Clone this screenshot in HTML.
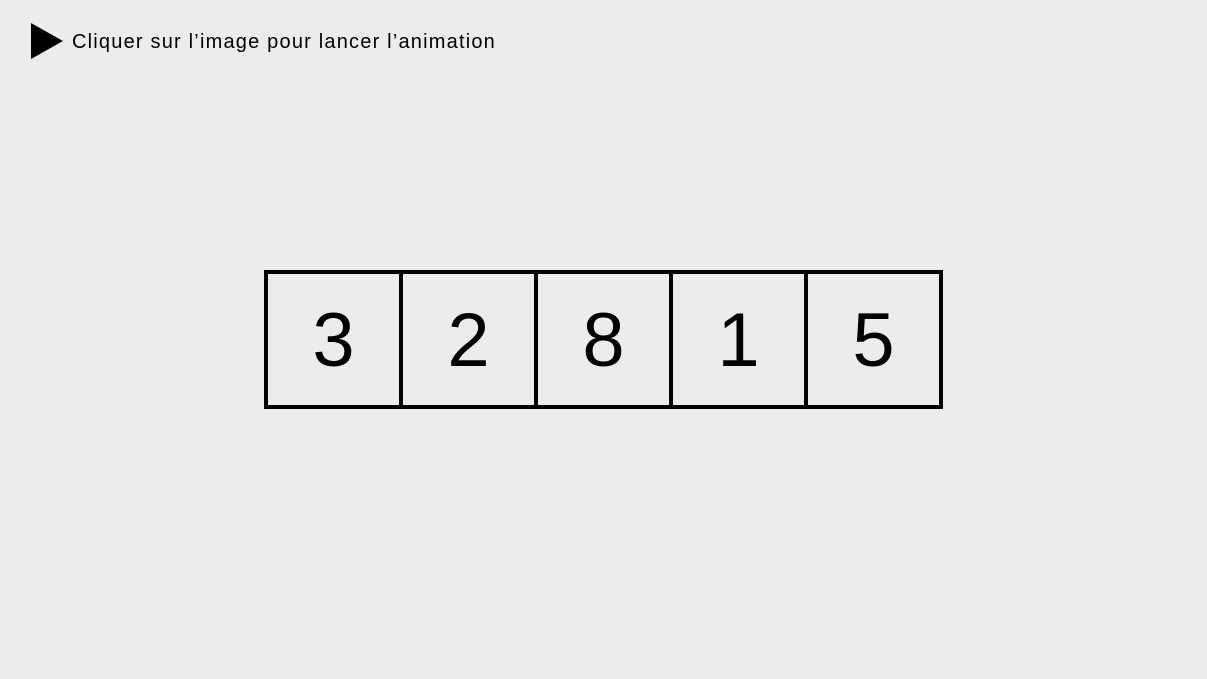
<!DOCTYPE html>
<html><head><style>
body{margin:0;width:1207px;height:679px;background:#ececec;position:relative;overflow:hidden;font-family:"Liberation Sans",sans-serif;}
.tri{position:absolute;left:31px;top:23px;width:0;height:0;border-top:18.5px solid transparent;border-bottom:18.5px solid transparent;border-left:32px solid #000;}
.lbl{position:absolute;left:72px;top:31px;font-size:20px;color:#000;white-space:nowrap;letter-spacing:1.2px;}
.cell{position:absolute;top:270px;width:131px;height:131px;border:4px solid #000;box-sizing:content-box;text-align:center;line-height:133px;font-size:76px;color:#000;}
</style></head><body>
<div class="tri"></div>
<div class="lbl">Cliquer sur l’image pour lancer l’animation</div>
<div class="cell" style="left:264px">3</div>
<div class="cell" style="left:399px">2</div>
<div class="cell" style="left:534px">8</div>
<div class="cell" style="left:669px">1</div>
<div class="cell" style="left:804px">5</div>
</body></html>
